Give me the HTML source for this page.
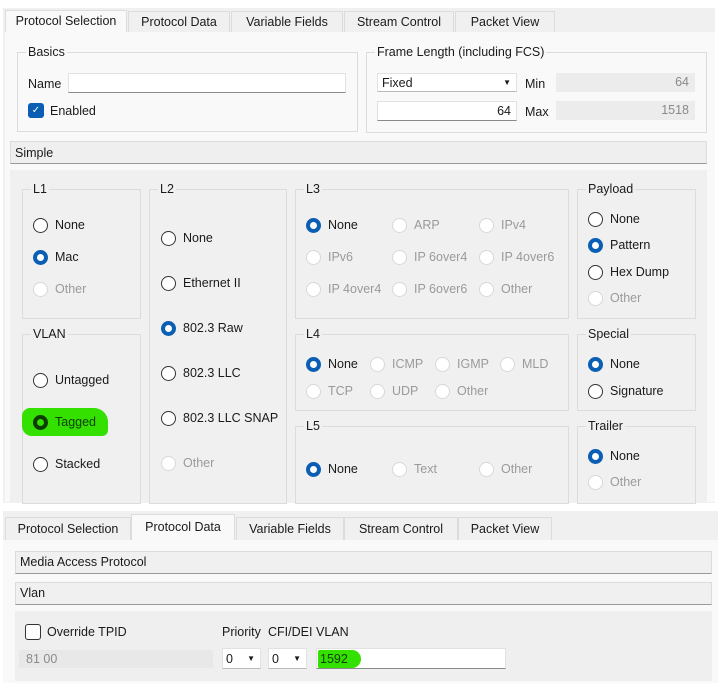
<!DOCTYPE html>
<html><head><meta charset="utf-8"><style>
*{box-sizing:border-box;margin:0;padding:0}
body{width:720px;height:693px;background:#fff;position:relative;overflow:hidden;font-family:"Liberation Sans",sans-serif;font-size:12.5px;color:#1a1a1a}
.a{position:absolute}
.g{position:absolute;border:1px solid #dcdcdc}
.gt{position:absolute;top:-8px;left:8px;padding:0 2px;background:inherit}
.tab{position:absolute;height:22px;border:1px solid #dcdcdc;border-bottom:none;background:#f0f0f0;text-align:center;line-height:21px}
.r{position:absolute;width:15px;height:15px;border-radius:50%;border:1.3px solid #333;background:#fff}
.r.on{border:4px solid #0a5fb4}
.r.dis{border-color:#d8d8d8}
.l{position:absolute;white-space:nowrap}
.dis2{color:#9a9a9a}
.inp{position:absolute;background:#fff;border:1px solid #e2e2e2;border-bottom:1px solid #8a8a8a}
.ro{position:absolute;background:#ececec;color:#8a8a8a;text-align:right;padding-right:6px;line-height:18px}
.bar{position:absolute;background:#f0f0f0;border:1px solid #dcdcdc;border-bottom:1px solid #9a9a9a;padding-left:4px;line-height:21px}
</style></head><body>
<!-- TOP -->
<div class="a" style="left:3px;top:8px;width:712px;height:495px;background:#f0f0f0"></div>
<div class="tab" style="left:5px;top:10px;width:122px;background:#f9f9f9">Protocol Selection</div>
<div class="tab" style="left:128px;top:11px;width:102px">Protocol Data</div>
<div class="tab" style="left:231px;top:11px;width:112px">Variable Fields</div>
<div class="tab" style="left:344px;top:11px;width:110px">Stream Control</div>
<div class="tab" style="left:455px;top:11px;width:100px">Packet View</div>
<div class="a" style="left:5px;top:32px;width:710px;height:470px;background:#f9f9f9"></div>
<div class="g" style="left:17px;top:52px;width:341px;height:80px;background:#f9f9f9"><span class="gt">Basics</span></div>
<div class="l" style="left:28px;top:77px">Name</div>
<div class="inp" style="left:68px;top:73px;width:278px;height:20px"></div>
<div class="a" style="left:28px;top:103px;width:16px;height:15px;border-radius:3px;background:#0a5fb4;color:#fff;font-size:10px;text-align:center;line-height:15px">✓</div>
<div class="l" style="left:50px;top:104px">Enabled</div>
<div class="g" style="left:366px;top:52px;width:341px;height:81px;background:#f9f9f9"><span class="gt">Frame Length (including FCS)</span></div>
<div class="inp" style="left:377px;top:73px;width:140px;height:19px;border-bottom-color:#bbb;padding-left:4px;line-height:18px">Fixed<span class="a" style="right:5px;top:0;font-size:8px">▼</span></div>
<div class="l" style="left:525px;top:77px">Min</div>
<div class="ro" style="left:556px;top:73px;width:139px;height:19px">64</div>
<div class="inp" style="left:377px;top:101px;width:140px;height:20px;text-align:right;padding-right:5px;line-height:19px">64</div>
<div class="l" style="left:525px;top:105px">Max</div>
<div class="ro" style="left:556px;top:101px;width:139px;height:19px">1518</div>
<div class="bar" style="left:10px;top:141px;width:697px;height:23px;background:#efefef;line-height:23px">Simple</div>
<div class="a" style="left:10px;top:170px;width:697px;height:333px;background:#f0f0f0"></div>

<div class="g" style="left:22px;top:189px;width:119px;height:130px"><span class="gt" style="background:#f0f0f0">L1</span></div>
<div class="g" style="left:22px;top:334px;width:119px;height:170px"><span class="gt" style="background:#f0f0f0">VLAN</span></div>
<div class="g" style="left:149px;top:189px;width:138px;height:315px"><span class="gt" style="background:#f0f0f0">L2</span></div>
<div class="g" style="left:295px;top:189px;width:274px;height:130px"><span class="gt" style="background:#f0f0f0">L3</span></div>
<div class="g" style="left:295px;top:334px;width:274px;height:77px"><span class="gt" style="background:#f0f0f0">L4</span></div>
<div class="g" style="left:295px;top:426px;width:274px;height:78px"><span class="gt" style="background:#f0f0f0">L5</span></div>
<div class="g" style="left:577px;top:189px;width:119px;height:130px"><span class="gt" style="background:#f0f0f0">Payload</span></div>
<div class="g" style="left:577px;top:334px;width:119px;height:77px"><span class="gt" style="background:#f0f0f0">Special</span></div>
<div class="g" style="left:577px;top:426px;width:119px;height:78px"><span class="gt" style="background:#f0f0f0">Trailer</span></div>

<div class="a" style="left:22px;top:408px;width:86px;height:28px;background:#33e000;border-radius:8px 14px 6px 10px"></div>

<div id="radios"></div>
<script>
var R=[
[40,225,'None',''],[40,257,'Mac','on'],[40,289,'Other','dis'],
[40,380,'Untagged',''],[40,422,'Tagged','tag'],[40,464,'Stacked',''],
[168,238,'None',''],[168,283,'Ethernet II',''],[168,328,'802.3 Raw','on'],[168,373,'802.3 LLC',''],[168,418,'802.3 LLC SNAP',''],[168,463,'Other','dis'],
[313,225,'None','on'],[399,225,'ARP','dis'],[486,225,'IPv4','dis'],
[313,257,'IPv6','dis'],[399,257,'IP 6over4','dis'],[486,257,'IP 4over6','dis'],
[313,289,'IP 4over4','dis'],[399,289,'IP 6over6','dis'],[486,289,'Other','dis'],
[313,364,'None','on'],[377,364,'ICMP','dis'],[442,364,'IGMP','dis'],[507,364,'MLD','dis'],
[313,391,'TCP','dis'],[377,391,'UDP','dis'],[442,391,'Other','dis'],
[313,469,'None','on'],[399,469,'Text','dis'],[486,469,'Other','dis'],
[595,219,'None',''],[595,245,'Pattern','on'],[595,272,'Hex Dump',''],[595,298,'Other','dis'],
[595,364,'None','on'],[595,391,'Signature',''],
[595,456,'None','on'],[595,482,'Other','dis']];
var h='';
R.forEach(function(x){var c=x[3],cls='r',st='';
if(c=='on')cls+=' on';if(c=='dis')cls+=' dis';
if(c=='tag'){st='border:4px solid #0d3d00;background:#33e000;';}
h+='<div class="'+cls+'" style="left:'+(x[0]-7)+'px;top:'+(x[1]-7)+'px;'+st+'"></div>';
h+='<div class="l'+(c=='dis'?' dis2':'')+'" style="left:'+(x[0]+15)+'px;top:'+(x[1]-7)+'px;'+(c=='tag'?'color:#0d3d00':'')+'">'+x[2]+'</div>';});
document.getElementById('radios').innerHTML=h;
</script>

<!-- BOTTOM -->
<div class="a" style="left:3px;top:511px;width:715px;height:172px;background:#f0f0f0"></div>
<div class="tab" style="left:5px;top:517px;width:126px;height:23px;line-height:23px">Protocol Selection</div>
<div class="tab" style="left:131px;top:514px;width:104px;height:26px;background:#f9f9f9;line-height:24px">Protocol Data</div>
<div class="tab" style="left:236px;top:517px;width:108px;height:23px;line-height:23px">Variable Fields</div>
<div class="tab" style="left:344px;top:517px;width:114px;height:23px;line-height:23px">Stream Control</div>
<div class="tab" style="left:458px;top:517px;width:94px;height:23px;line-height:23px">Packet View</div>
<div class="a" style="left:3px;top:540px;width:715px;height:143px;background:#f9f9f9"></div>
<div class="bar" style="left:15px;top:551px;width:697px;height:23px">Media Access Protocol</div>
<div class="bar" style="left:15px;top:582px;width:697px;height:23px">Vlan</div>
<div class="a" style="left:15px;top:611px;width:697px;height:70px;background:#efefef"></div>
<div class="a" style="left:25px;top:624px;width:16px;height:16px;border:1.3px solid #333;border-radius:3px;background:#fff"></div>
<div class="l" style="left:47px;top:625px">Override TPID</div>
<div class="a" style="left:19px;top:650px;width:194px;height:18px;background:#e8e8e8;color:#8a8a8a;padding-left:7px;line-height:18px">81 00</div>
<div class="l" style="left:222px;top:625px">Priority</div>
<div class="l" style="left:268px;top:625px">CFI/DEI</div>
<div class="l" style="left:316px;top:625px">VLAN</div>
<div class="inp" style="left:222px;top:648px;width:39px;height:21px;padding-left:3px;line-height:20px;border-bottom-color:#bbb">0<span class="a" style="right:5px;top:0;font-size:8px">▼</span></div>
<div class="inp" style="left:268px;top:648px;width:39px;height:21px;padding-left:3px;line-height:20px;border-bottom-color:#bbb">0<span class="a" style="right:5px;top:0;font-size:8px">▼</span></div>
<div class="inp" style="left:316px;top:648px;width:190px;height:21px"></div>
<div class="a" style="left:318px;top:650px;width:43px;height:18px;background:#33e000;border-radius:2px 10px 10px 2px"></div>
<div class="l" style="left:320px;top:652px;color:#0d3d00">1592</div>
</body></html>
